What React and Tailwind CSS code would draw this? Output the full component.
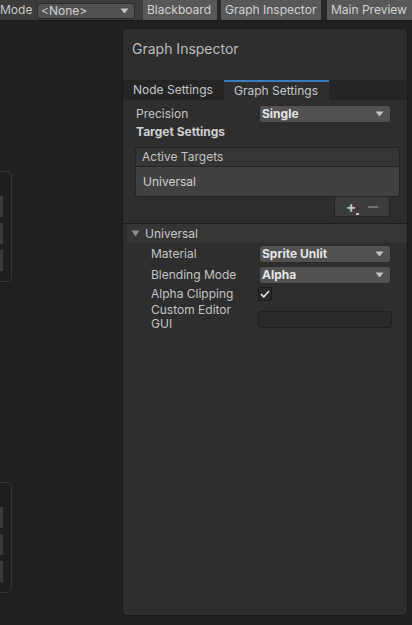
import React from 'react';

const Caret = () => (
  <svg width="9" height="6" viewBox="0 0 9 6" className="shrink-0">
    <path d="M0.5 0.5 L8.5 0.5 L4.5 5.5 Z" fill="#c4c4c4" />
  </svg>
);

const Dropdown = ({ value, bold = true }) => (
  <div className="w-[132px] h-[18px] rounded-[3px] bg-[#515151] border border-[#2b2b2b] flex items-center justify-between pl-[2px] pr-[6px]">
    <span className={`text-[12px] text-[#e4e4e4] ${bold ? 'font-bold' : ''}`}>{value}</span>
    <Caret />
  </div>
);

const NodeFragment = ({ top }) => (
  <div
    className="absolute left-0 w-[12px] h-[111px] rounded-r-[5px] border border-l-0 border-[#353535] bg-[#1f1f1f] flex flex-col gap-[6px] pt-[24px]"
    style={{ top }}
  >
    <div className="w-[3px] h-[21px] bg-[#3a3a3a]" />
    <div className="w-[3px] h-[21px] bg-[#3a3a3a]" />
    <div className="w-[3px] h-[21px] bg-[#3a3a3a]" />
  </div>
);

export default function App() {
  return (
    <div
      className="w-[412px] h-[625px] bg-[#202020] flex flex-col overflow-hidden text-[#c4c4c4]"
      style={{ fontFamily: 'Inter, "Noto Sans", sans-serif' }}
    >
      {/* toolbar */}
      <div className="h-[21px] bg-[#3c3c3c] border-b border-[#191919] flex items-start shrink-0">
        <span className="text-[12px] leading-[20px] text-[#c8c8c8] w-[37px]">Mode</span>
        <div className="mt-[3px] w-[98px] h-[16px] rounded-[3px] bg-[#515151] border border-[#2b2b2b] flex items-center justify-between pl-[3px] pr-[5px]">
          <span className="text-[12px] text-[#d2d2d2]">&lt;None&gt;</span>
          <Caret />
        </div>
        <div className="ml-[8px] h-[20px] w-[74px] bg-[#585858] flex items-center pl-[4px] text-[12px] text-[#d2d2d2]">Blackboard</div>
        <div className="h-[20px] w-[4px] bg-[#2a2a2a]" />
        <div className="h-[20px] w-[100px] bg-[#585858] flex items-center pl-[4px] text-[12px] text-[#d2d2d2]">Graph Inspector</div>
        <div className="h-[20px] w-[6px] bg-[#2a2a2a]" />
        <div className="h-[20px] flex-1 bg-[#585858] flex items-center pl-[4px] text-[12px] text-[#d2d2d2] whitespace-nowrap">Main Preview</div>
      </div>

      {/* canvas */}
      <div className="relative flex-1">
        <div className="absolute left-[39px] top-0 bottom-0 w-px bg-[#1e1e1e]" />
        <NodeFragment top={150} />
        <NodeFragment top={461} />

        {/* inspector panel */}
        <div className="relative ml-[122px] mt-[7px] w-[286px] h-[588px] rounded-[5px] bg-[#2e2e2e] border border-[#1a1a1a] flex flex-col">
          <div className="h-[51px] pl-[9px] pt-[9px] text-[14px] text-[#bdbdbd]">Graph Inspector</div>

          {/* tabs */}
          <div className="h-[20px] bg-[#252525] flex">
            <div className="w-[101px] flex items-center pl-[10px] text-[12px] text-[#c4c4c4]">Node Settings</div>
            <div className="w-[105px] bg-[#2e2e2e] border-t-2 border-[#3d7bbd] flex items-center pl-[10px] text-[12px] text-[#c8c8c8]">Graph Settings</div>
          </div>

          {/* precision */}
          <div className="mt-[5px] h-[18px] flex items-center pl-[13px]">
            <span className="w-[123px] text-[12px]">Precision</span>
            <Dropdown value="Single" />
          </div>
          <div className="mt-[1px] h-[16px] flex items-center pl-[13px] text-[12px] font-bold text-[#d0d0d0]">Target Settings</div>

          {/* active targets list */}
          <div className="mt-[7px] ml-[12px] w-[265px] rounded-[3px] border border-[#232323] overflow-hidden">
            <div className="h-[19px] bg-[#353535] border-b border-[#232323] flex items-center pl-[6px] text-[12px] text-[#c4c4c4]">Active Targets</div>
            <div className="h-[29px] bg-[#414141] flex items-center pl-[7px] text-[12px] text-[#d0d0d0]">Universal</div>
          </div>
          <div className="ml-[211px] w-[56px] h-[20px] bg-[#3c3c3c] rounded-b-[3px] border border-t-0 border-[#232323] flex items-center justify-center gap-[12px] text-[#c4c4c4]">
            <span className="relative text-[15px] leading-none font-bold">
              +
              <span className="absolute right-[-3px] bottom-[-1px] w-[3px] h-[2px] bg-[#c4c4c4]" />
            </span>
            <span className="w-[10px] h-[2px] bg-[#727272]" />
          </div>

          {/* universal foldout */}
          <div className="mt-[6px] h-px bg-[#1d1d1d]" />
          <div className="ml-[4px] h-[19px] bg-[#353535] flex items-center pl-[4px] gap-[5px] text-[12px] text-[#c8c8c8]">
            <svg width="9" height="7" viewBox="0 0 9 7">
              <path d="M0.5 0.5 L8.5 0.5 L4.5 6.5 Z" fill="#8c8c8c" />
            </svg>
            <span>Universal</span>
          </div>

          <div className="mt-[2px] h-[18px] flex items-center pl-[28px]">
            <span className="w-[108px] text-[12px]">Material</span>
            <Dropdown value="Sprite Unlit" />
          </div>
          <div className="mt-[3px] h-[18px] flex items-center pl-[28px]">
            <span className="w-[108px] text-[12px]">Blending Mode</span>
            <Dropdown value="Alpha" />
          </div>
          <div className="mt-[2px] h-[16px] flex items-center pl-[28px]">
            <span className="w-[107px] text-[12px]">Alpha Clipping</span>
            <div className="w-[14px] h-[14px] rounded-[2px] bg-[#2a2a2a] border border-[#1b1b1b] flex items-center justify-center">
              <svg width="10" height="8" viewBox="0 0 10 8">
                <path d="M1 4.2 L3.8 6.8 L9 1" fill="none" stroke="#e6e6e6" strokeWidth="1.6" />
              </svg>
            </div>
          </div>
          <div className="mt-[1px] flex items-start pl-[28px]">
            <span className="w-[107px] text-[12px] leading-[14px]">Custom Editor<br />GUI</span>
            <div className="mt-[8px] w-[134px] h-[17px] rounded-[3px] bg-[#2a2a2a] border border-[#1e1e1e]" />
          </div>
        </div>
      </div>
    </div>
  );
}
